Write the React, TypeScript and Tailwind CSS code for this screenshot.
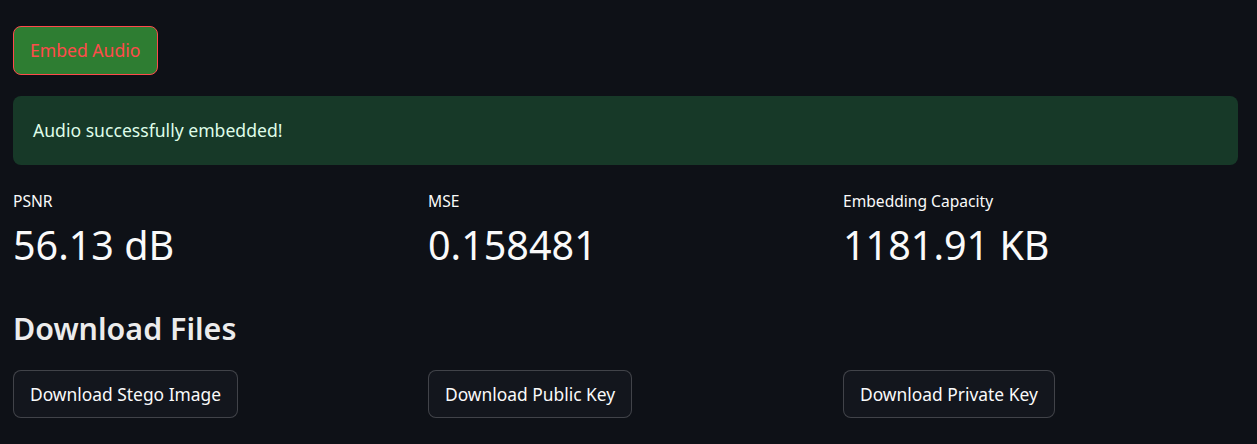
export default function App() {
  const font = { fontFamily: '"Source Sans Pro", "Noto Sans", sans-serif' };
  return (
    <div className="min-h-[444px] w-[1257px] bg-[#0e1117] text-[#fafafa]" style={font}>
      <div className="flex w-[1238px] flex-col pl-[13px] pt-[26px]">
        <div>
          <button className="h-[49px] rounded-lg border border-[#ff4b4b] bg-[#2e7d32] px-[16px] text-[17.6px] text-[#ff4b4b]">
            Embed Audio
          </button>
        </div>
        <div className="mt-[21px] flex h-[69px] items-center rounded-lg bg-[#173928] px-[20px] text-[17.6px] text-[#dffde9]">
          Audio successfully embedded!
        </div>
        <div className="mt-[25px] grid grid-cols-[399px_399px_399px] gap-x-[16px]">
          {[
            ["PSNR", "56.13 dB"],
            ["MSE", "0.158481"],
            ["Embedding Capacity", "1181.91 KB"],
          ].map(([l, v]) => (
            <div key={l} className="flex flex-col">
              <div className="text-[15.6px] leading-[22px]">{l}</div>
              <div className="mt-[9px] text-[39.5px] leading-[48px]">{v}</div>
            </div>
          ))}
        </div>
        <h2 className="mt-[40px] text-[30.4px] font-semibold leading-[40px] text-[#ececec]">Download Files</h2>
        <div className="mt-[21px] grid grid-cols-[399px_399px_399px] gap-x-[16px]">
          {["Download Stego Image", "Download Public Key", "Download Private Key"].map((t) => (
            <div key={t}>
              <button className="h-[48px] rounded-lg border border-[rgba(250,250,250,0.2)] bg-[#13161d] px-[16px] text-[17.4px] text-[#fafafa]">
                {t}
              </button>
            </div>
          ))}
        </div>
      </div>
    </div>
  );
}
